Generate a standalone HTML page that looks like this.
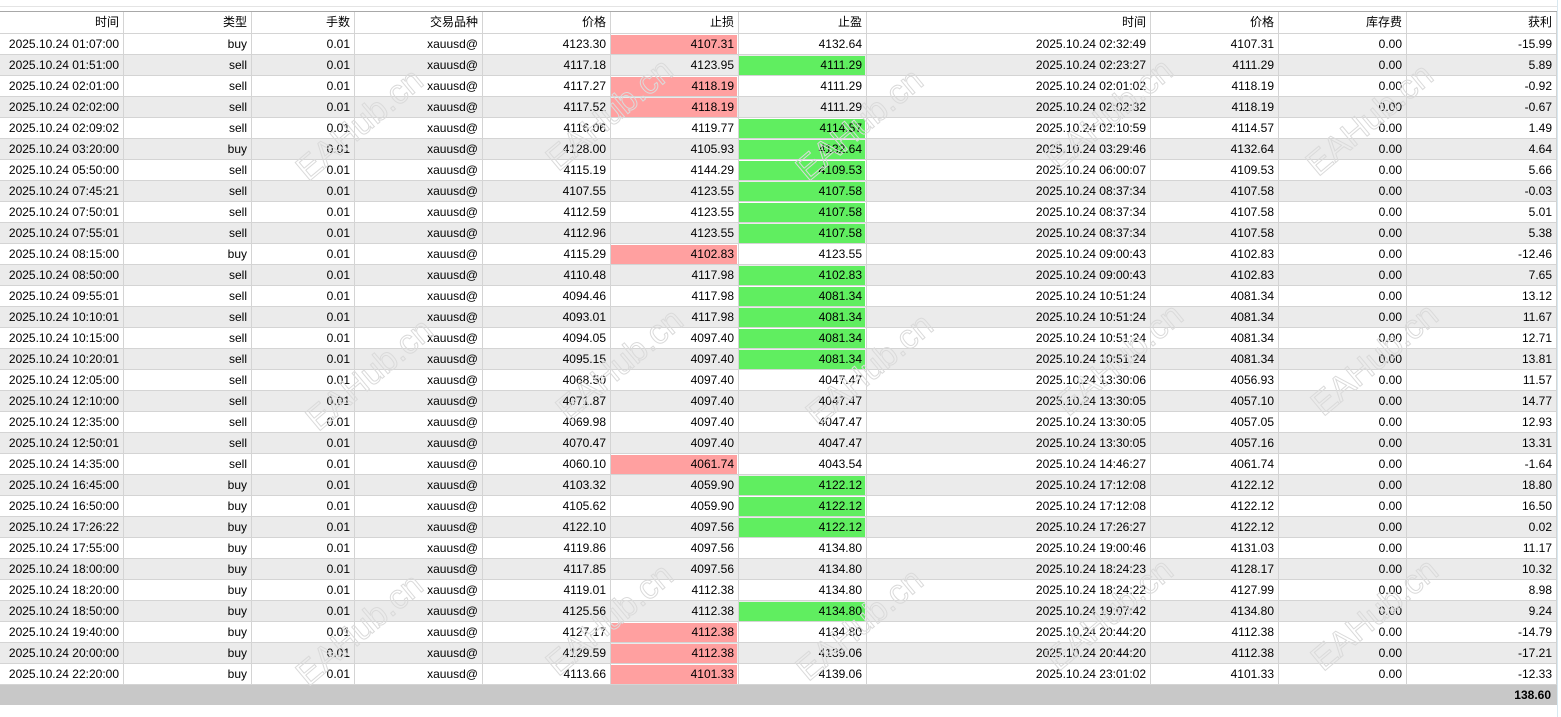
<!DOCTYPE html>
<html><head><meta charset="utf-8"><style>
*{margin:0;padding:0;box-sizing:border-box}
body{width:1561px;height:717px;background:#fff;position:relative;overflow:hidden;font-family:"Liberation Sans","Noto Sans CJK SC",sans-serif;font-size:12px;color:#000}
.l1{position:absolute;left:0;top:6px;width:1557px;height:1px;background:#e4e4e4}
.l2{position:absolute;left:0;top:11px;width:1557px;height:1px;background:#a8a8a8}
.vr{position:absolute;left:1557px;top:0;width:1px;height:717px;background:#d8e8f0}
.t{position:absolute;left:0;top:12px;width:1557px}
.r{display:flex;height:21px;border-bottom:1px solid #d4d4d4}
.r.g{background:#ebebeb}
.r>div{border-right:1px solid #d4d4d4;text-align:right;padding-right:4px;line-height:20px;position:relative;white-space:nowrap}
.r>div:nth-child(1){width:124px}.r>div:nth-child(2){width:128px}.r>div:nth-child(3){width:103px}
.r>div:nth-child(4){width:128px}.r>div:nth-child(5){width:128px}.r>div:nth-child(6){width:128px}
.r>div:nth-child(7){width:128px}.r>div:nth-child(8){width:284px}.r>div:nth-child(9){width:128px}
.r>div:nth-child(10){width:128px}.r>div:nth-child(11){width:150px}
.r.h{height:22px}
.r.h>div{line-height:21px}
.rd,.gn{position:relative}
.rd::before,.gn::before{content:"";position:absolute;left:0;top:1px;right:1px;bottom:0;z-index:-1}
.rd::before{background:#ffa0a0}.gn::before{background:#60ee60}
.r>div.rd,.r>div.gn{z-index:0}
.f{position:absolute;left:0;top:685px;width:1557px;height:20px;background:#c8c8c8;text-align:right;padding-right:6px;line-height:20px;font-weight:bold}
.w{position:absolute;font-size:34px;color:transparent;-webkit-text-stroke:1px #dadada;transform:translate(-50%,-50%) rotate(-40deg);white-space:nowrap;pointer-events:none;font-family:"Liberation Sans",sans-serif}
</style></head><body>
<div class="l1"></div><div class="l2"></div><div class="vr"></div>
<div class="t">
<div class="r h"><div>时间</div><div>类型</div><div>手数</div><div>交易品种</div><div>价格</div><div>止损</div><div>止盈</div><div>时间</div><div>价格</div><div>库存费</div><div>获利</div></div>
<div class="r"><div>2025.10.24 01:07:00</div><div>buy</div><div>0.01</div><div>xauusd@</div><div>4123.30</div><div class="rd">4107.31</div><div>4132.64</div><div>2025.10.24 02:32:49</div><div>4107.31</div><div>0.00</div><div>-15.99</div></div>
<div class="r g"><div>2025.10.24 01:51:00</div><div>sell</div><div>0.01</div><div>xauusd@</div><div>4117.18</div><div>4123.95</div><div class="gn">4111.29</div><div>2025.10.24 02:23:27</div><div>4111.29</div><div>0.00</div><div>5.89</div></div>
<div class="r"><div>2025.10.24 02:01:00</div><div>sell</div><div>0.01</div><div>xauusd@</div><div>4117.27</div><div class="rd">4118.19</div><div>4111.29</div><div>2025.10.24 02:01:02</div><div>4118.19</div><div>0.00</div><div>-0.92</div></div>
<div class="r g"><div>2025.10.24 02:02:00</div><div>sell</div><div>0.01</div><div>xauusd@</div><div>4117.52</div><div class="rd">4118.19</div><div>4111.29</div><div>2025.10.24 02:02:32</div><div>4118.19</div><div>0.00</div><div>-0.67</div></div>
<div class="r"><div>2025.10.24 02:09:02</div><div>sell</div><div>0.01</div><div>xauusd@</div><div>4116.06</div><div>4119.77</div><div class="gn">4114.57</div><div>2025.10.24 02:10:59</div><div>4114.57</div><div>0.00</div><div>1.49</div></div>
<div class="r g"><div>2025.10.24 03:20:00</div><div>buy</div><div>0.01</div><div>xauusd@</div><div>4128.00</div><div>4105.93</div><div class="gn">4132.64</div><div>2025.10.24 03:29:46</div><div>4132.64</div><div>0.00</div><div>4.64</div></div>
<div class="r"><div>2025.10.24 05:50:00</div><div>sell</div><div>0.01</div><div>xauusd@</div><div>4115.19</div><div>4144.29</div><div class="gn">4109.53</div><div>2025.10.24 06:00:07</div><div>4109.53</div><div>0.00</div><div>5.66</div></div>
<div class="r g"><div>2025.10.24 07:45:21</div><div>sell</div><div>0.01</div><div>xauusd@</div><div>4107.55</div><div>4123.55</div><div class="gn">4107.58</div><div>2025.10.24 08:37:34</div><div>4107.58</div><div>0.00</div><div>-0.03</div></div>
<div class="r"><div>2025.10.24 07:50:01</div><div>sell</div><div>0.01</div><div>xauusd@</div><div>4112.59</div><div>4123.55</div><div class="gn">4107.58</div><div>2025.10.24 08:37:34</div><div>4107.58</div><div>0.00</div><div>5.01</div></div>
<div class="r g"><div>2025.10.24 07:55:01</div><div>sell</div><div>0.01</div><div>xauusd@</div><div>4112.96</div><div>4123.55</div><div class="gn">4107.58</div><div>2025.10.24 08:37:34</div><div>4107.58</div><div>0.00</div><div>5.38</div></div>
<div class="r"><div>2025.10.24 08:15:00</div><div>buy</div><div>0.01</div><div>xauusd@</div><div>4115.29</div><div class="rd">4102.83</div><div>4123.55</div><div>2025.10.24 09:00:43</div><div>4102.83</div><div>0.00</div><div>-12.46</div></div>
<div class="r g"><div>2025.10.24 08:50:00</div><div>sell</div><div>0.01</div><div>xauusd@</div><div>4110.48</div><div>4117.98</div><div class="gn">4102.83</div><div>2025.10.24 09:00:43</div><div>4102.83</div><div>0.00</div><div>7.65</div></div>
<div class="r"><div>2025.10.24 09:55:01</div><div>sell</div><div>0.01</div><div>xauusd@</div><div>4094.46</div><div>4117.98</div><div class="gn">4081.34</div><div>2025.10.24 10:51:24</div><div>4081.34</div><div>0.00</div><div>13.12</div></div>
<div class="r g"><div>2025.10.24 10:10:01</div><div>sell</div><div>0.01</div><div>xauusd@</div><div>4093.01</div><div>4117.98</div><div class="gn">4081.34</div><div>2025.10.24 10:51:24</div><div>4081.34</div><div>0.00</div><div>11.67</div></div>
<div class="r"><div>2025.10.24 10:15:00</div><div>sell</div><div>0.01</div><div>xauusd@</div><div>4094.05</div><div>4097.40</div><div class="gn">4081.34</div><div>2025.10.24 10:51:24</div><div>4081.34</div><div>0.00</div><div>12.71</div></div>
<div class="r g"><div>2025.10.24 10:20:01</div><div>sell</div><div>0.01</div><div>xauusd@</div><div>4095.15</div><div>4097.40</div><div class="gn">4081.34</div><div>2025.10.24 10:51:24</div><div>4081.34</div><div>0.00</div><div>13.81</div></div>
<div class="r"><div>2025.10.24 12:05:00</div><div>sell</div><div>0.01</div><div>xauusd@</div><div>4068.50</div><div>4097.40</div><div>4047.47</div><div>2025.10.24 13:30:06</div><div>4056.93</div><div>0.00</div><div>11.57</div></div>
<div class="r g"><div>2025.10.24 12:10:00</div><div>sell</div><div>0.01</div><div>xauusd@</div><div>4071.87</div><div>4097.40</div><div>4047.47</div><div>2025.10.24 13:30:05</div><div>4057.10</div><div>0.00</div><div>14.77</div></div>
<div class="r"><div>2025.10.24 12:35:00</div><div>sell</div><div>0.01</div><div>xauusd@</div><div>4069.98</div><div>4097.40</div><div>4047.47</div><div>2025.10.24 13:30:05</div><div>4057.05</div><div>0.00</div><div>12.93</div></div>
<div class="r g"><div>2025.10.24 12:50:01</div><div>sell</div><div>0.01</div><div>xauusd@</div><div>4070.47</div><div>4097.40</div><div>4047.47</div><div>2025.10.24 13:30:05</div><div>4057.16</div><div>0.00</div><div>13.31</div></div>
<div class="r"><div>2025.10.24 14:35:00</div><div>sell</div><div>0.01</div><div>xauusd@</div><div>4060.10</div><div class="rd">4061.74</div><div>4043.54</div><div>2025.10.24 14:46:27</div><div>4061.74</div><div>0.00</div><div>-1.64</div></div>
<div class="r g"><div>2025.10.24 16:45:00</div><div>buy</div><div>0.01</div><div>xauusd@</div><div>4103.32</div><div>4059.90</div><div class="gn">4122.12</div><div>2025.10.24 17:12:08</div><div>4122.12</div><div>0.00</div><div>18.80</div></div>
<div class="r"><div>2025.10.24 16:50:00</div><div>buy</div><div>0.01</div><div>xauusd@</div><div>4105.62</div><div>4059.90</div><div class="gn">4122.12</div><div>2025.10.24 17:12:08</div><div>4122.12</div><div>0.00</div><div>16.50</div></div>
<div class="r g"><div>2025.10.24 17:26:22</div><div>buy</div><div>0.01</div><div>xauusd@</div><div>4122.10</div><div>4097.56</div><div class="gn">4122.12</div><div>2025.10.24 17:26:27</div><div>4122.12</div><div>0.00</div><div>0.02</div></div>
<div class="r"><div>2025.10.24 17:55:00</div><div>buy</div><div>0.01</div><div>xauusd@</div><div>4119.86</div><div>4097.56</div><div>4134.80</div><div>2025.10.24 19:00:46</div><div>4131.03</div><div>0.00</div><div>11.17</div></div>
<div class="r g"><div>2025.10.24 18:00:00</div><div>buy</div><div>0.01</div><div>xauusd@</div><div>4117.85</div><div>4097.56</div><div>4134.80</div><div>2025.10.24 18:24:23</div><div>4128.17</div><div>0.00</div><div>10.32</div></div>
<div class="r"><div>2025.10.24 18:20:00</div><div>buy</div><div>0.01</div><div>xauusd@</div><div>4119.01</div><div>4112.38</div><div>4134.80</div><div>2025.10.24 18:24:22</div><div>4127.99</div><div>0.00</div><div>8.98</div></div>
<div class="r g"><div>2025.10.24 18:50:00</div><div>buy</div><div>0.01</div><div>xauusd@</div><div>4125.56</div><div>4112.38</div><div class="gn">4134.80</div><div>2025.10.24 19:07:42</div><div>4134.80</div><div>0.00</div><div>9.24</div></div>
<div class="r"><div>2025.10.24 19:40:00</div><div>buy</div><div>0.01</div><div>xauusd@</div><div>4127.17</div><div class="rd">4112.38</div><div>4134.80</div><div>2025.10.24 20:44:20</div><div>4112.38</div><div>0.00</div><div>-14.79</div></div>
<div class="r g"><div>2025.10.24 20:00:00</div><div>buy</div><div>0.01</div><div>xauusd@</div><div>4129.59</div><div class="rd">4112.38</div><div>4139.06</div><div>2025.10.24 20:44:20</div><div>4112.38</div><div>0.00</div><div>-17.21</div></div>
<div class="r"><div>2025.10.24 22:20:00</div><div>buy</div><div>0.01</div><div>xauusd@</div><div>4113.66</div><div class="rd">4101.33</div><div>4139.06</div><div>2025.10.24 23:01:02</div><div>4101.33</div><div>0.00</div><div>-12.33</div></div>
</div>
<div class="f">138.60</div>
<div class="w" style="left:360px;top:125px">EAHub.cn</div>
<div class="w" style="left:610px;top:115px">EAHub.cn</div>
<div class="w" style="left:860px;top:125px">EAHub.cn</div>
<div class="w" style="left:1110px;top:115px">EAHub.cn</div>
<div class="w" style="left:1370px;top:120px">EAHub.cn</div>
<div class="w" style="left:370px;top:375px">EAHub.cn</div>
<div class="w" style="left:620px;top:365px">EAHub.cn</div>
<div class="w" style="left:870px;top:370px">EAHub.cn</div>
<div class="w" style="left:1120px;top:360px">EAHub.cn</div>
<div class="w" style="left:1375px;top:360px">EAHub.cn</div>
<div class="w" style="left:360px;top:630px">EAHub.cn</div>
<div class="w" style="left:610px;top:620px">EAHub.cn</div>
<div class="w" style="left:860px;top:625px">EAHub.cn</div>
<div class="w" style="left:1110px;top:615px">EAHub.cn</div>
<div class="w" style="left:1375px;top:615px">EAHub.cn</div>
</body></html>
